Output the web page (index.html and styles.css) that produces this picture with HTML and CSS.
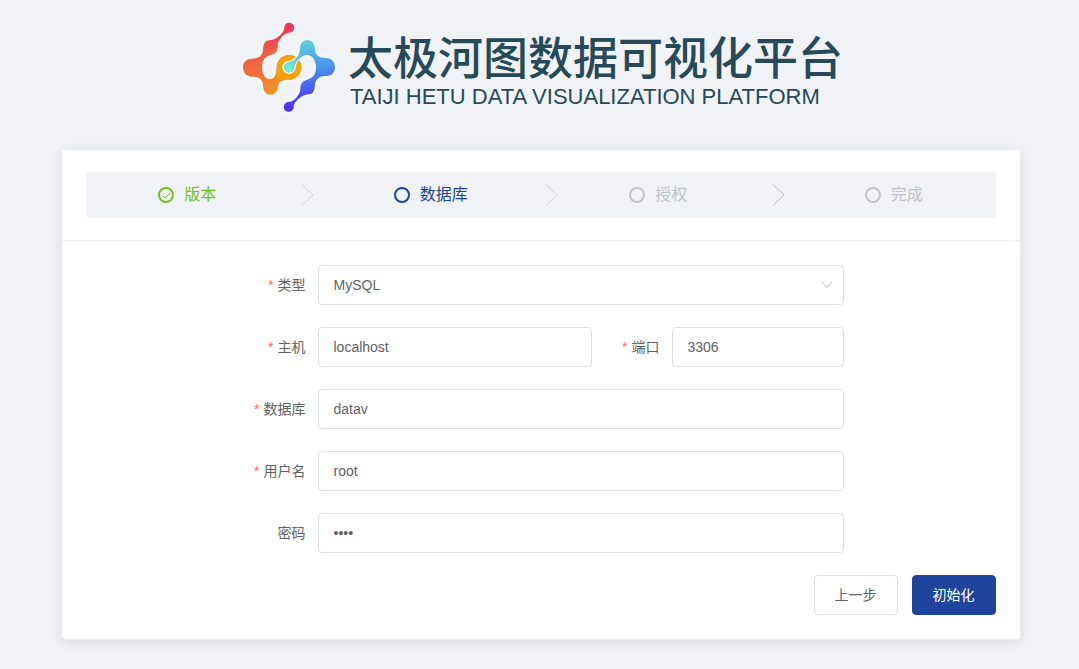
FILE: index.html
```
<!DOCTYPE html>
<html lang="zh-CN">
<head>
<meta charset="utf-8">
<meta name="viewport" content="width=device-width, initial-scale=1">
<title>太极河图数据可视化平台</title>
<link rel="stylesheet" href="styles.css">
</head>
<body>
<header class="brand">
  <svg class="brand-logo" viewBox="0 0 360 315" aria-hidden="true">
    <defs>
      <linearGradient id="warm" gradientUnits="userSpaceOnUse" x1="150" y1="24" x2="180" y2="240">
        <stop offset="0" stop-color="#ee2e5a"/>
        <stop offset="0.35" stop-color="#ee5a45"/>
        <stop offset="0.65" stop-color="#f0703c"/>
        <stop offset="1" stop-color="#f49a26"/>
      </linearGradient>
      <radialGradient id="ring" gradientUnits="userSpaceOnUse" cx="177" cy="157" r="76">
        <stop offset="0.45" stop-color="#f5a509"/>
        <stop offset="1" stop-color="#f3932a" stop-opacity="0"/>
      </radialGradient>
      <linearGradient id="cool" gradientUnits="userSpaceOnUse" x1="205" y1="80" x2="225" y2="290">
        <stop offset="0" stop-color="#5fd0e2"/>
        <stop offset="0.4" stop-color="#4a92ea"/>
        <stop offset="0.7" stop-color="#4a58fa"/>
        <stop offset="1" stop-color="#5a22fc"/>
      </linearGradient>
      <linearGradient id="core" gradientUnits="userSpaceOnUse" x1="180" y1="160" x2="222" y2="100">
        <stop offset="0" stop-color="#68f2d2"/>
        <stop offset="1" stop-color="#5fd0e2" stop-opacity="0"/>
      </linearGradient>
      <filter id="glow" x="-20%" y="-20%" width="140%" height="140%">
        <feGaussianBlur stdDeviation="6"/>
      </filter>
      <path id="left" d="M163 42C158 58 135 76 118 76C104 77 100 88 99 105C97 124 84 131 65 131C48 131 39 142 39 157C39 173 49 185 66 185C88 185 98 193 99 212C100 230 109 239 122 239C136 239 144 228 145 210C146 198 158 194 177 194A37 37 0 1 0 140 157C140 178 133 193 121 193C106 193 96 178 96 157C96 137 104 125 122 120C137 116 144 108 143 92C143 80 155 60 174 53A15 15 0 1 0 163 42Z"/>
      <path id="right" d="M191 272C196 256 219 238 236 238C250 237 254 226 255 209C257 190 270 183 289 183C306 183 315 172 315 157C315 141 305 129 288 129C266 129 256 121 255 102C254 84 245 75 232 75C218 75 210 86 210 101C209 121 196 138 176 142A15 15 0 1 0 192 158C195 144 207 126 225 121C245 116 258 136 258 157C258 177 250 189 232 194C217 198 210 206 211 222C211 234 199 254 180 261A15 15 0 1 0 191 272Z"/>
    </defs>
    <g filter="url(#glow)" fill="#ffffff" stroke="#ffffff" stroke-width="12" opacity="0.5">
      <use href="#left"/>
      <use href="#right"/>
    </g>
    <use href="#left" fill="url(#warm)"/>
    <use href="#left" fill="url(#ring)"/>
    <circle cx="177" cy="157" r="20" fill="#f8f9fb"/>
    <use href="#right" fill="url(#cool)" stroke="#f8f9fb" stroke-width="6" paint-order="stroke"/>
    <path d="M210 101C209 121 196 138 176 142A15 15 0 1 0 192 158C195 144 207 126 225 121L240 76L220 76Z" fill="url(#core)"/>
  </svg>
  <div class="brand-text">
    <h1 class="brand-name">太极河图数据可视化平台</h1>
    <p class="brand-sub">TAIJI HETU DATA VISUALIZATION PLATFORM</p>
  </div>
</header>

<main class="card">
  <div class="card-header">
    <ol class="steps">
      <li class="step step-done">
        <svg class="step-icon" viewBox="0 0 16 16" aria-hidden="true"><circle cx="8" cy="8" r="7"/><path class="tick" d="M4 8.5L7 11L12 6"/></svg>
        <span>版本</span>
        <span class="step-arrow"><svg class="arrow" viewBox="0 0 18 22" aria-hidden="true"><path d="M6 0.5L17 11L6 21.5"/></svg></span>
      </li>
      <li class="step step-active" aria-current="step">
        <svg class="step-icon" viewBox="0 0 16 16" aria-hidden="true"><circle cx="8" cy="8" r="7"/></svg>
        <span>数据库</span>
        <span class="step-arrow"><svg class="arrow" viewBox="0 0 18 22" aria-hidden="true"><path d="M6 0.5L17 11L6 21.5"/></svg></span>
      </li>
      <li class="step">
        <svg class="step-icon" viewBox="0 0 16 16" aria-hidden="true"><circle cx="8" cy="8" r="7"/></svg>
        <span>授权</span>
        <span class="step-arrow"><svg class="arrow arrow-dark" viewBox="0 0 18 22" aria-hidden="true"><path d="M6 0.5L17 11L6 21.5"/></svg></span>
      </li>
      <li class="step step-last">
        <svg class="step-icon" viewBox="0 0 16 16" aria-hidden="true"><circle cx="8" cy="8" r="7"/></svg>
        <span>完成</span>
      </li>
    </ol>
  </div>

  <form class="card-body">
    <div class="fields">
      <div class="row">
        <label class="label required" for="type">类型</label>
        <div class="select-wrap">
          <select class="control" id="type"><option>MySQL</option></select>
          <svg class="chevron" viewBox="0 0 12 8" aria-hidden="true"><path d="M1 1L6 6.5L11 1"/></svg>
        </div>
      </div>
      <div class="row">
        <label class="label required" for="host">主机</label>
        <input class="control control-host" id="host" type="text" value="localhost">
        <label class="label label-port required" for="port">端口</label>
        <input class="control control-port" id="port" type="text" value="3306">
      </div>
      <div class="row">
        <label class="label required" for="database">数据库</label>
        <input class="control" id="database" type="text" value="datav">
      </div>
      <div class="row">
        <label class="label required" for="user">用户名</label>
        <input class="control" id="user" type="text" value="root">
      </div>
      <div class="row">
        <label class="label" for="password">密码</label>
        <input class="control" id="password" type="password" value="root">
      </div>
    </div>
    <div class="actions">
      <button class="button" type="button">上一步</button>
      <button class="button button-primary" type="submit">初始化</button>
    </div>
  </form>
</main>
</body>
</html>
```
FILE: styles.css
```
* {
  box-sizing: border-box;
}

body {
  margin: 0;
  padding: 15px 24px 28px 26px;
  background: #f0f2f5;
  color: #606266;
  font-family: "Liberation Sans", "Noto Sans CJK SC", sans-serif;
  font-size: 14px;
}

.brand {
  display: flex;
  justify-content: center;
  height: 105px;
  margin-bottom: 29px;
  padding-right: 8px;
}

.brand-logo {
  width: 120px;
  height: 105px;
  flex: none;
}

.brand-text {
  margin-left: -2px;
  padding-top: 19px;
  color: #264a59;
  white-space: nowrap;
}

.brand-name {
  margin: 0;
  font-size: 45px;
  font-weight: 500;
  line-height: 52px;
}

.brand-sub {
  margin: 0;
  padding-left: 2px;
  font-size: 22px;
  line-height: 22px;
}

.card {
  max-width: 960px;
  margin: 0 auto;
  background: #fff;
  border: 1px solid #ebeef5;
  border-radius: 4px;
  box-shadow: 0 2px 12px rgba(0, 0, 0, 0.1);
}

.card-header {
  padding: 22px 24px;
  border-bottom: 1px solid #ebeef5;
}

.steps {
  display: flex;
  margin: 0;
  padding: 13px 8%;
  list-style: none;
  background: #f0f2f5;
  border-radius: 4px;
  color: #c0c4cc;
  font-size: 16px;
  line-height: 20px;
}

.step {
  display: flex;
  flex: 1;
  align-items: center;
  white-space: nowrap;
}

.step-last {
  flex: none;
}

.step-done {
  color: #73c020;
}

.step-active {
  color: #20449c;
}

.step-icon {
  width: 16px;
  height: 16px;
  margin-right: 10px;
  fill: none;
  stroke: currentColor;
  stroke-width: 2;
}

.tick {
  stroke-width: 1;
}

.step-arrow {
  display: flex;
  flex: 1;
  justify-content: center;
}

.arrow {
  width: 18px;
  height: 22px;
  margin: -1px 0;
  fill: none;
  stroke: #d2d4d9;
}

.arrow-dark {
  stroke: #bcbfc6;
}

.card-body {
  padding: 24px;
}

.fields {
  display: grid;
  gap: 22px;
  padding: 0 152px 22px 112px;
}

.row {
  display: flex;
  align-items: center;
}

.label {
  flex: none;
  width: 120px;
  padding-right: 12px;
  text-align: right;
  line-height: 40px;
}

.label-port {
  width: 80px;
}

.required::before {
  content: "*";
  margin-right: 4px;
  color: #f56c6c;
}

.control {
  flex: 1;
  width: 100%;
  min-width: 0;
  height: 40px;
  padding: 0 15px;
  background: #fff;
  border: 1px solid #dcdfe6;
  border-radius: 4px;
  color: #606266;
  font-family: inherit;
  font-size: 14px;
  appearance: none;
}

.control-host {
  flex: 274 1 274px;
}

.control-port {
  flex: 172 1 172px;
}

.select-wrap {
  position: relative;
  display: flex;
  flex: 1;
}

.chevron {
  position: absolute;
  top: 16px;
  right: 11px;
  width: 12px;
  height: 8px;
  fill: none;
  stroke: #b4b8c0;
  pointer-events: none;
}

.actions {
  display: flex;
  justify-content: flex-end;
  gap: 14px;
}

.button {
  height: 40px;
  padding: 0 20px 2px;
  background: #fff;
  border: 1px solid #dcdfe6;
  border-radius: 4px;
  color: #606266;
  font-family: inherit;
  font-size: 14px;
}

.button-primary {
  background: #20449c;
  border-color: #20449c;
  color: #fff;
}

@media (max-width: 760px) {
  .fields {
    padding: 0 0 22px;
  }

  .label {
    width: 80px;
  }
}
```
